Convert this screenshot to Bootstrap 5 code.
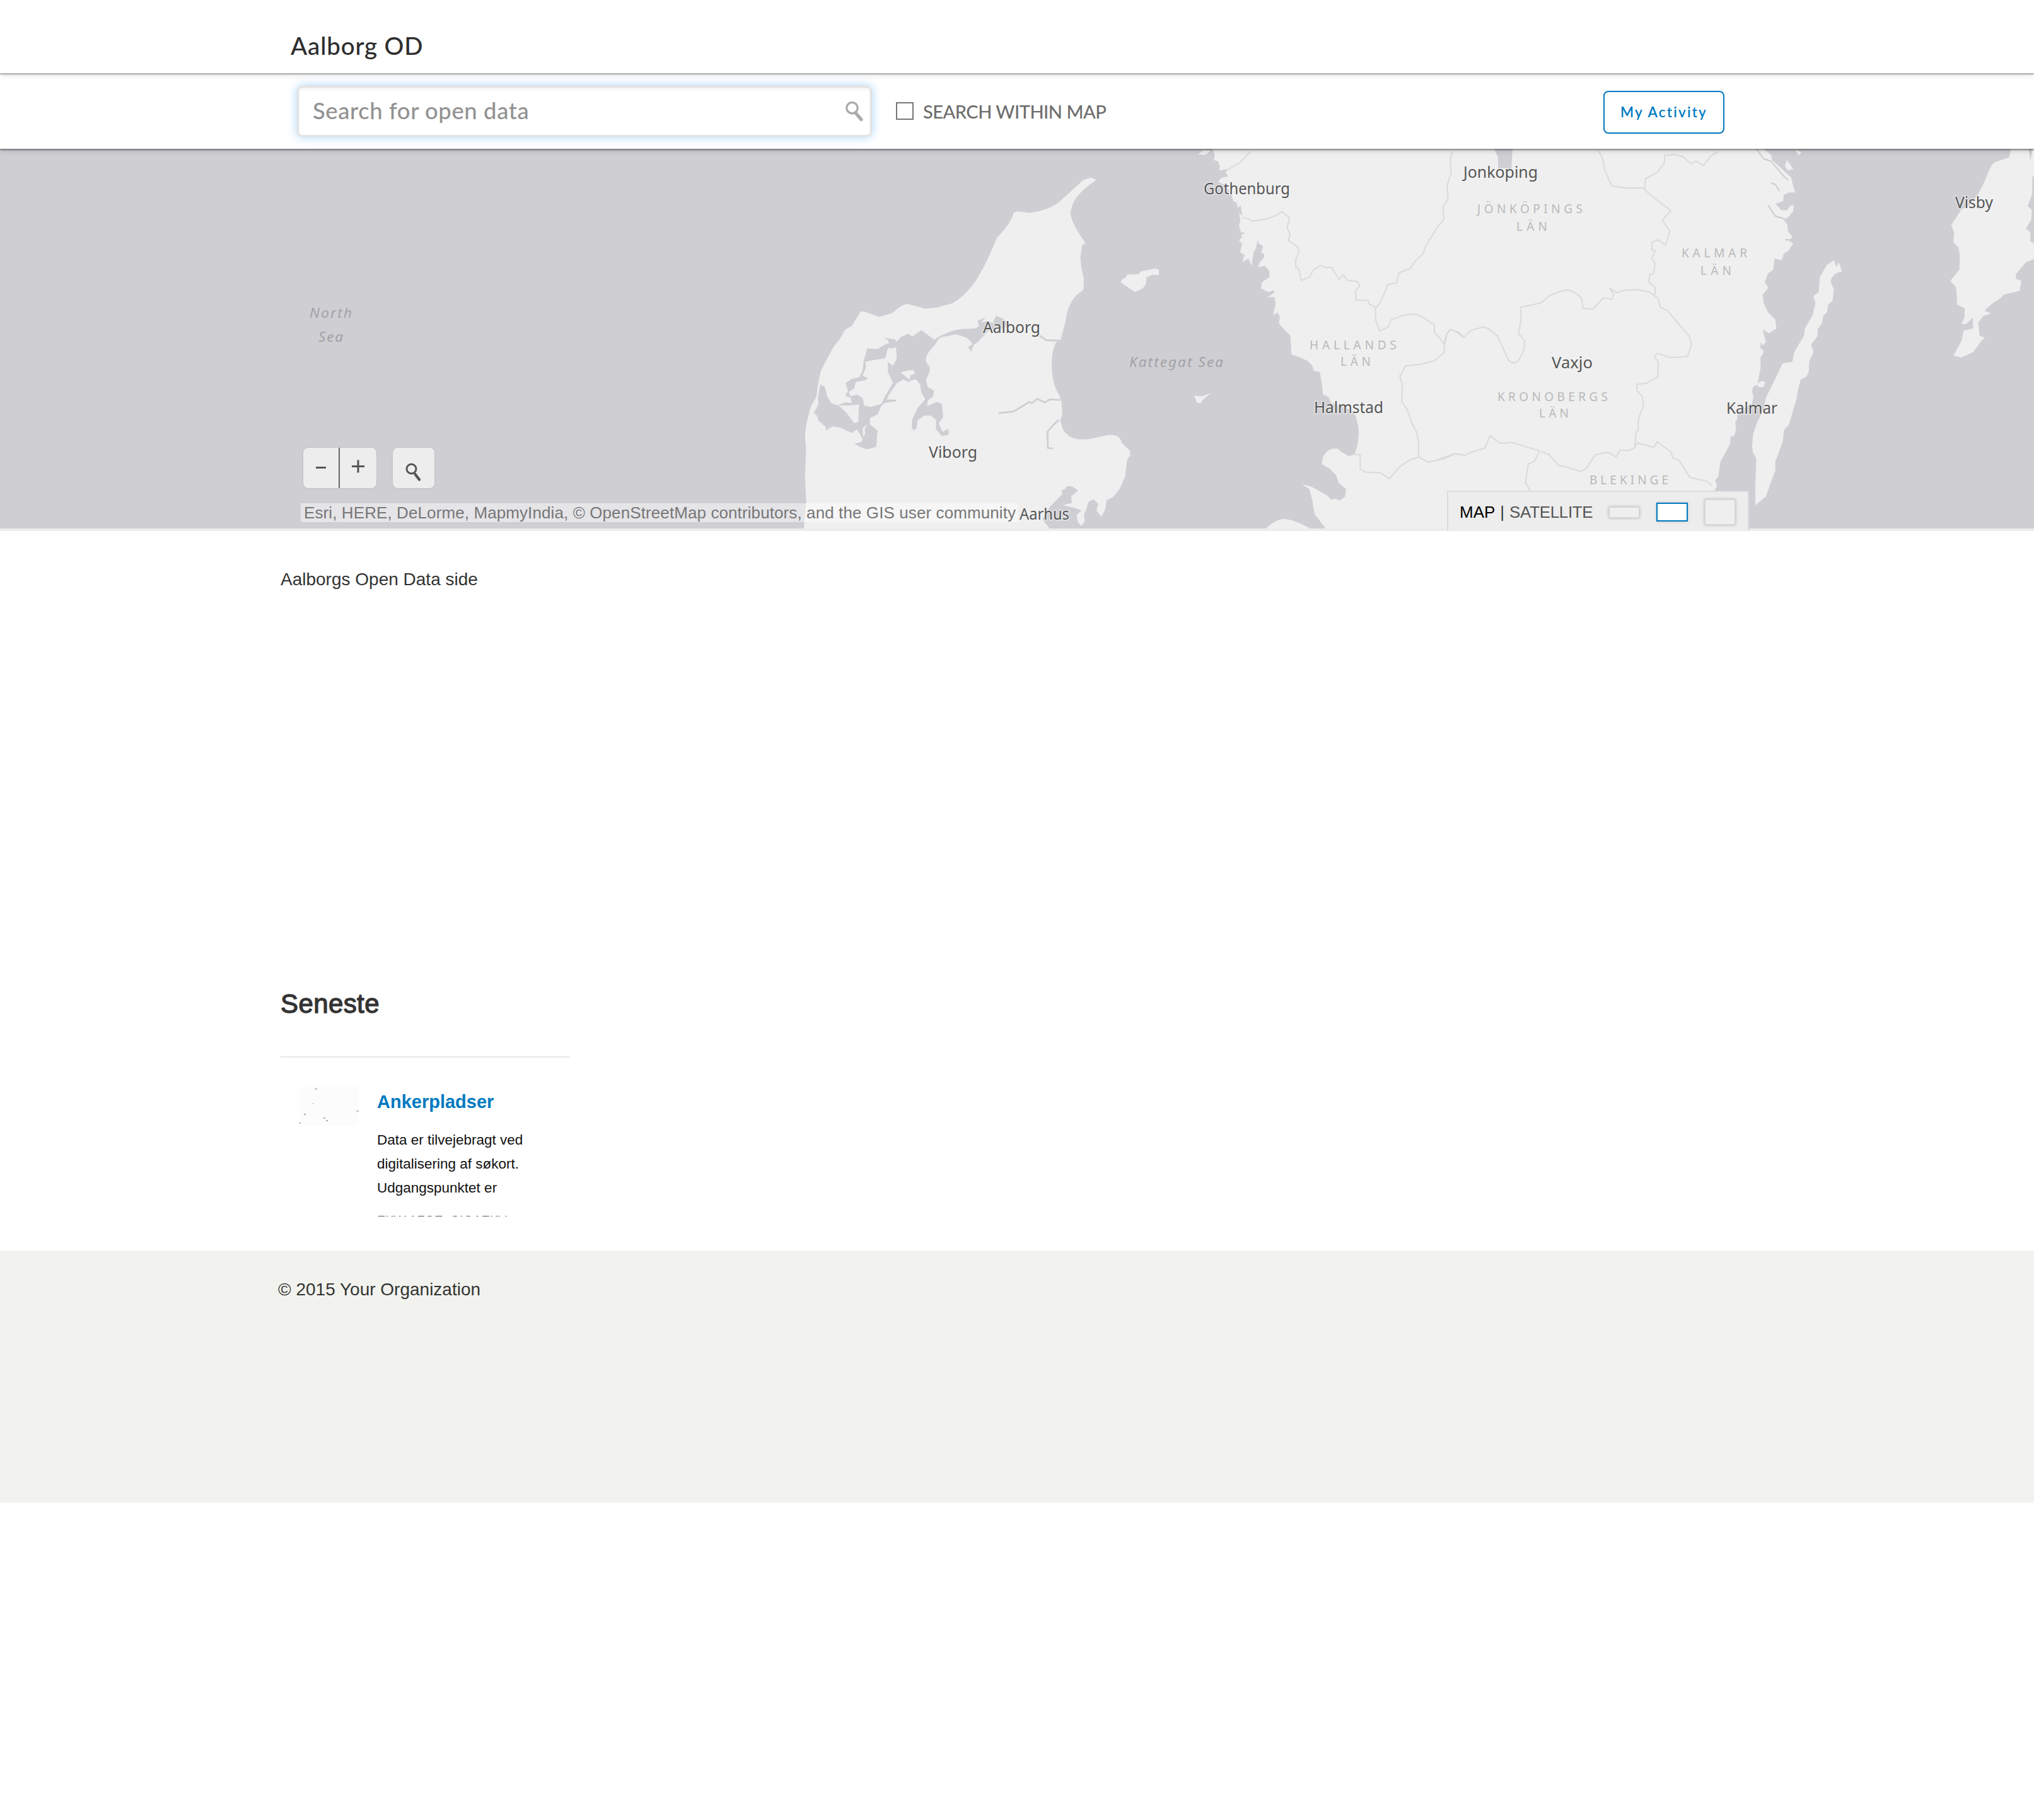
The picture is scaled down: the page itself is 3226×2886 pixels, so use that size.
<!DOCTYPE html>
<html lang="da">
<head>
<meta charset="utf-8">
<title>Aalborg OD</title>
<link href="https://cdn.jsdelivr.net/npm/bootstrap@5.3.0/dist/css/bootstrap.min.css" rel="stylesheet">
<style>
body{font-family:"Liberation Sans",Arial,sans-serif;font-size:28px;line-height:40px;color:#333;background:#fff}
.site-head{height:116px;padding:51px 0 0 461px;font:500 38.5px/42px Lato,sans-serif;letter-spacing:.85px;color:#2e2e2e;z-index:3;box-shadow:0 2px 2px rgba(0,0,0,.3),0 4px 8px rgba(0,0,0,.1)}
.search-bar{height:120px;padding:0 491px 0 471px;z-index:2;font-family:Lato,sans-serif;box-shadow:0 2px 2px rgba(0,0,0,.38),0 4px 8px rgba(0,0,0,.13)}
.search-box{width:912px;height:81px;border:3px solid #e3e2e2;border-radius:8px;box-shadow:0 0 16px #a9d5f8,inset 0 3px 4px rgba(0,0,0,.05);padding:0 11px 3px 22px}
.search-box input.form-control{font:500 36.5px/44px Lato,sans-serif;letter-spacing:.55px;height:60px;color:#777}
.search-box input::placeholder{color:#929292;opacity:1}
.within{gap:15px;margin-left:38px;font-size:29px;font-weight:500;color:#6e6e6e;letter-spacing:-.5px}
.within span{padding-top:2px}
.within input.form-check-input{width:28px;height:28px;margin:0;border:2px solid #777;border-radius:0}
.btn-activity{width:192px;height:68px;margin-top:4px;padding:0;border:2px solid #0079c1;border-radius:8px;color:#0079c1;font:600 22.5px/64px Lato,sans-serif;letter-spacing:2.2px}
.map-area{height:606px;background:#cfced3;border-bottom:4px solid #ececee}
.map-area>svg{width:3226px;height:602px}
.map-tools{left:481px;top:474px;gap:26px}
.tool{height:64px;background:#ededed;border-radius:8px;box-shadow:0 0 3px rgba(0,0,0,.12)}
.attribution{left:477px;top:562px;width:1138px;height:30px;padding-left:5px;font-size:26px;line-height:31px;letter-spacing:.1px;background:rgba(255,255,255,.45);color:#777;white-space:nowrap}
.base-switch{left:2295px;top:542px;width:479px;height:64px;background:#ededed;border:2px solid #dcdcdc;border-bottom:0;font-size:26px;line-height:30px;padding:2px 0 0 18px}
.sat{color:#555;letter-spacing:-.35px}
.sizers{gap:26px;padding-right:19px}
.sizer{width:50px;background:#efefef;border:2px solid #d6d6d6;border-radius:3px;box-shadow:0 0 4px rgba(0,0,0,.2)}
.sizer-flat{height:19px}
.sizer-tall{height:42px}
.sizer-on{height:30px;background:#fff;border-color:#0079c1;border-radius:0}
.page-body{height:1141px;padding:57px 0 0 445px}
.latest{width:459px;margin-top:628px}
.latest h2{font-size:42px;line-height:50px;margin:0;color:#333;font-weight:400;letter-spacing:.4px;-webkit-text-stroke:1.3px #333;padding-bottom:58px;border-bottom:2px solid #e8e8e8}
.entry{height:206px;margin-top:46px;padding-left:30px}
.entry h3{font-size:29px;line-height:34px;margin:7px 0 25px;font-weight:700}
.entry h3 a{color:#0079c1}
.entry p{font-size:22.5px;line-height:38px;color:#111;margin:0 0 17px;width:240px}
.owner{font-size:20px;line-height:30px;color:#555;white-space:pre}
.site-foot{height:400px;background:#f2f3ee;padding:42px 0 0 441px}
</style>
</head>
<body>
<header class="site-head bg-white position-relative">Aalborg OD</header>
<div class="search-bar bg-white position-relative d-flex align-items-center">
  <div class="search-box d-flex align-items-center">
    <input class="form-control border-0 p-0 shadow-none bg-transparent" type="text" placeholder="Search for open data" aria-label="Search">
    <svg width="32" height="36" viewBox="0 0 32 36" fill="none" stroke="#aaa"><circle cx="14" cy="14" r="9" stroke-width="3.4"/><path d="M19.5 22L29 33" stroke-width="5.4" stroke-linecap="round"/></svg>
  </div>
  <label class="within d-flex align-items-center"><input class="form-check-input" type="checkbox"><span>SEARCH WITHIN MAP</span></label>
  <button class="btn btn-activity ms-auto" type="button">My Activity</button>
</div>

<section class="map-area position-relative">
<svg class="d-block" viewBox="0 236 3226 602" fill="#efefef">
  <!-- Jutland -->
  <g transform="translate(1200 230) scale(.40816 .39541)">
    <path d="M183 1540L193 1430 188 1330 192 1220 188 1165 193 1120 210 1050 232 1010 240 950 250 905 275 855 300 808 325 775 345 740 370 725 405 667 420 668 475 689 525 675C550 655 570 635 590 638L655 656 700 652 760 635C800 610 830 580 860 530 890 480 910 430 935 370 960 345 985 315 1000 270L1015 266 1060 272C1120 265 1160 245 1190 215L1270 140 1300 130 1320 140C1250 190 1225 225 1220 275 1225 310 1240 330 1250 350L1278 393 1265 402 1258 450 1262 490 1272 540 1270 580 1240 605C1210 640 1205 680 1200 710L1180 785 1163 792C1146 830 1144 870 1150 930 1155 960 1165 985 1175 1000L1185 1030 1188 1080 1180 1105 1190 1140C1215 1180 1250 1185 1300 1178L1370 1162C1400 1162 1412 1170 1420 1195L1450 1225 1452 1245 1440 1260 1432 1330 1410 1380 1385 1412 1360 1425 1355 1460 1340 1490 1320 1465 1328 1440 1310 1420 1290 1430 1280 1465 1272 1480 1275 1510 1262 1527 1250 1515 1243 1485 1262 1465 1235 1455 1190 1445 1225 1435 1222 1410 1250 1385 1225 1368 1205 1368 1200 1378 1185 1385 1188 1400 1140 1450 1110 1500 1140 1540Z"/>
    <g fill="#cfced3">
      <path d="M540 795L560 770 590 757 605 768 640 742 690 780C730 755 770 740 800 738L850 735 865 725 858 705 890 692 872 712 900 705 918 715 930 685 955 695 985 720 960 735 900 745 860 790 845 800 833 830 822 810 838 800C835 780 800 762 770 760L720 770C700 775 705 790 685 810 660 840 650 860 665 880 680 890 672 915 658 940L665 970 690 985 685 1010 665 1025 662 1047 700 1030 720 1038 722 1060 725 1090 708 1115 722 1150 745 1138 747 1160 720 1168 697 1140 697 1100 675 1085 650 1085 625 1105 622 1135 612 1145 603 1135 605 1100 625 1055 655 1020 640 990 635 960 620 940 605 942 590 950 570 940 545 955 515 1000 505 1020 545 1022 540 1028 500 1033 485 1045 470 1080 440 1095 440 1120 470 1145 465 1210 430 1220 405 1212 380 1198 408 1190 412 1178 390 1140 370 1155 330 1135 295 1128 270 1145 268 1130 240 1105 235 1085 222 1075 240 1040 238 1010 248 960 265 970 275 1010 290 1035 320 1045 350 1075 380 1115 395 1110 398 1040 350 1045 315 1043 345 1032 370 1035 365 1008 390 1000 412 1015 418 1045 445 1050 485 1038 500 1005 530 955 510 910 510 870 530 885 545 855Z"/>
      <path d="M430 815L470 818 500 800 515 795 510 782 495 772 540 780 548 800 535 815 510 815 500 855 440 865 422 870 425 890 412 925 432 935 425 942 385 950 380 975 358 990 368 1015 345 1005 355 985 345 955 370 938 400 930 413 900 415 870Z"/>
      <g fill="none" stroke="#cfced3" stroke-linejoin="round"><path stroke-width="8" d="M1100 765L1125 782 1182 785"/><path stroke-width="7" d="M940 1075L1000 1068 1025 1052 1060 1030 1070 1035 1090 1018 1120 1032 1140 1020 1180 1022"/><path stroke-width="7" d="M1175 1102L1155 1120 1130 1150 1132 1215 1152 1217"/></g>
    </g>
    <path d="M560 912L585 905 610 903 615 918 600 922 592 940ZM430 1120L412 1135 413 1170 422 1160 420 1140ZM1415 550L1420 540 1435 530 1440 520 1485 518 1492 507 1525 500 1550 495 1563 500 1563 522 1540 520 1515 530 1512 560 1500 575 1470 590 1445 572Z"/>
  </g>
  <!-- Swedish west coast -->
  <g transform="translate(1820 230) scale(.33333 .39541)">
    <path d="M310 15L320 45 315 60 335 65 345 85 340 102 385 97 370 110 385 125 350 132 335 148 370 160 400 200 408 225 425 232 430 255 442 240 452 285 435 270 442 300 435 325 445 350 465 350 445 362 450 370 435 382 450 395 440 430 462 440 450 470 480 455 495 485 505 430 515 415 525 380 530 395 550 405 540 435 555 435 555 450 535 470 525 490 560 485 580 505 580 530 545 550 540 575 575 590 600 582 605 590 572 610 605 610 610 640 597 680 620 672 630 690 625 715 640 730 680 765 685 840 720 850 760 865 785 885 790 905 820 910 830 960 835 1000 860 1010 875 1035 960 1060 990 1085 1000 1120C1012 1160 1000 1210 985 1240L960 1248 920 1230 905 1218 885 1217C850 1222 830 1245 830 1280L870 1300 898 1325 910 1355 945 1380 940 1410 915 1425 890 1418 875 1423 855 1405 780 1370 735 1360 770 1380 785 1430 795 1480 850 1540H1505V15ZM560 1540Q610 1500 650 1500T780 1540ZM240 38L265 20 300 22 275 40ZM222 1005L260 1008 302 995 265 1020 252 1036 235 1033Z"/>
  </g>
  <path d="M2318 236H2704V838H2318Z"/>
  <!-- Swedish east coast, Oland and Gotland -->
  <g transform="translate(2700 230) scale(.33546 .39541)">
    <path d="M-5 15H290L325 40 330 60 420 130 425 150 438 190 410 190 385 200 382 225 345 235 375 262 400 262 418 242 432 240 430 265 405 290 385 300 402 320 405 345 425 368 410 385 430 395 405 425 385 435 375 462 342 455 335 500 310 515 295 550 312 572 300 585 285 600 290 635 310 670 345 700 350 735 315 755 285 740 300 790 285 805 275 790 275 815 290 825 285 840 275 850 275 895 260 960 240 970 235 990 242 1010 235 1035 165 1075 165 1100 155 1110 160 1140 150 1168 135 1168 130 1200 95 1255 85 1270 75 1330 60 1345 70 1365 55 1390 50 1540H-5Z"/>
    <path fill="none" stroke="#cfced3" stroke-width="6" d="M255 15L290 55 325 65 385 125 405 140M325 152L345 158 365 185M310 240L345 285 395 298M392 380H425"/>
    <path d="M400 60L430 97 405 102 390 85ZM440 20L470 28 455 42ZM255 960L280 945 298 950 290 970 270 972ZM622 462L635 490 645 470 660 508C630 510 605 530 608 550L622 580 615 625 595 640 590 670 572 685 565 715 545 740 545 765 515 800 525 830 505 870 503 910 490 930 465 940 450 990 445 1020 430 1060 410 1120 385 1145 380 1190 345 1270 345 1305 325 1350 300 1410 250 1445 250 1370 255 1255 240 1235 235 1210 240 1160 260 1110 290 1060 300 1015 340 945 380 875 425 870 435 830 480 765 485 735 520 685 535 635 525 605 550 590 555 530 590 480ZM1460 15L1450 50 1420 58 1380 70 1365 85C1350 110 1330 160 1305 195L1260 245 1225 258 1177 320 1190 350 1187 390 1210 410 1217 440 1215 500 1172 545 1200 570 1205 640 1240 655 1240 690 1225 718 1245 718 1280 692 1280 735 1235 745 1225 785 1187 845 1225 852 1280 830 1320 785 1335 772 1310 765 1305 710 1330 685 1365 675 1335 665C1370 630 1400 625 1425 600L1500 585 1508 545 1480 535 1485 515 1530 470 1575 455V400L1550 385 1552 350 1530 335 1555 300 1558 260 1538 245 1560 195 1560 130 1575 110V15H1560L1552 65 1542 15Z"/>
  </g>
  <path fill="#cfced3" d="M2370 236L2376 250V266L2397 268 2399 236Z"/>
  <!-- county borders -->
  <g fill="none" stroke="#dadada" stroke-width="2">
    <g transform="translate(1820 230) scale(.33333 .39541)">
      <path vector-effect="non-scaling-stroke" d="M490 25L440 70 385 98M450 290L475 295 500 305 560 298 610 283 640 267 675 292 665 330 678 360 670 382 715 408 720 430 705 460 705 487 722 500 730 543 770 530 790 500 825 483 850 492 875 490 912 540 932 520 950 542 1000 548 1010 565 990 585 992 622 1050 623 1055 638 1085 650 1085 700 1105 745 1145 730 1160 700 1230 680 1280 678 1310 690 1365 722 1365 750 1412 797 1412 832 1365 865 1295 880 1225 887 1215 910 1200 925 1212 960 1210 1030 1235 1060 1260 1120 1280 1150 1290 1190 1290 1250 1335 1272 1410 1258 1465 1238 1500 1242M1085 655L1105 635 1145 560 1185 552 1197 512 1250 495 1275 465 1312 435 1320 410 1375 335 1410 298 1405 250 1430 215 1425 165 1445 110 1440 60 1450 25M1412 797L1420 765 1440 740 1475 752 1500 770M985 1240L1012 1243 1012 1300 1040 1312 1110 1315 1150 1338 1200 1290 1250 1262 1290 1252"/>
    </g>
    <g transform="translate(2280 230) scale(.33333 .39541)">
      <path vector-effect="non-scaling-stroke" d="M762 20L785 50 795 100 830 165 900 172 985 172 990 135 1045 110 1080 70 1080 42 1130 38 1170 48 1205 75 1230 65 1265 82 1300 45 1335 25M980 175L1040 218 1110 263 1070 302 1105 345 1085 402 1050 380 1020 390 1020 420 1035 425 1020 455 1035 475 1028 515 1010 520 1005 550 1035 570 1035 600M35 797L45 755 60 740 100 750 125 770 160 743 215 730 240 735 265 752 285 765 325 840C340 880 375 885 395 850L412 820 415 785 385 755 398 700 395 650 430 645 495 632 530 605 590 585C630 575 660 590 685 615L692 655 740 658 790 612 830 618 838 598 818 575 855 592 885 583 950 580 1010 590 1050 615 1060 650 1095 665 1150 720 1200 770 1208 800 1190 848 1110 853 1045 835 1032 850 1050 870 1048 930 995 955 948 960 950 985 975 1010 980 1045 955 1100 955 1145 945 1150 938 1215 910 1225 870 1222 850 1250 810 1232 750 1242 710 1295 680 1310 610 1290 575 1285 530 1240 480 1225 350 1192 300 1197 250 1165 225 1215 150 1235 130 1245 80 1238 0 1262M938 1215L950 1195 1030 1212 1045 1190 1110 1230 1120 1255 1150 1265 1200 1333 1280 1348 1305 1365M485 1227L460 1270 432 1278 418 1352 440 1385"/>
    </g>
  </g>
  <g font-family="Noto Sans" font-size="24.5" fill="#555">
    <g stroke="#f4f4f4" stroke-width="3" stroke-opacity=".6" paint-order="stroke">
    <text x="1559" y="528" textLength="91" lengthAdjust="spacingAndGlyphs">Aalborg</text>
    <text x="1473" y="726" textLength="77" lengthAdjust="spacingAndGlyphs">Viborg</text>
    <text x="1617" y="824" textLength="79" lengthAdjust="spacingAndGlyphs">Aarhus</text>
    <text x="1909" y="308" textLength="137" lengthAdjust="spacingAndGlyphs">Gothenburg</text>
    <text x="2084" y="655" textLength="110" lengthAdjust="spacingAndGlyphs">Halmstad</text>
    <text x="2321" y="282" textLength="118" lengthAdjust="spacingAndGlyphs">Jonkoping</text>
    <text x="2461" y="584" textLength="65" lengthAdjust="spacingAndGlyphs">Vaxjo</text>
    <text x="2738" y="656" textLength="81" lengthAdjust="spacingAndGlyphs">Kalmar</text>
    <text x="3101" y="330" textLength="60" lengthAdjust="spacingAndGlyphs">Visby</text>
    </g>
    <g font-size="19" fill="#b9b9b9">
    <text x="2077" y="554" textLength="138">HALLANDS</text><text x="2126" y="580" textLength="48">LÄN</text>
    <text x="2343" y="338" textLength="167">JÖNKÖPINGS</text><text x="2405" y="366" textLength="49">LÄN</text>
    <text x="2667" y="408" textLength="104">KALMAR</text><text x="2697" y="436" textLength="49">LÄN</text>
    <text x="2375" y="636" textLength="175">KRONOBERGS</text><text x="2441" y="662" textLength="47">LÄN</text>
    <text x="2521" y="768" textLength="125">BLEKINGE</text>
    </g>
    <g font-size="22.5" font-style="italic" fill="#a3a2a7">
    <text x="1791" y="582" textLength="149">Kattegat Sea</text>
    <text x="491" y="504" textLength="67">North</text><text x="505" y="542" textLength="39">Sea</text>
    </g>
  </g>
</svg>
  <div class="map-tools position-absolute d-flex">
    <div class="tool d-flex"><svg width="116" height="64" fill="none" stroke="#555" stroke-width="3"><path d="M20 31.5H36M77 29.5H97M87 19.5V39.5"/><path stroke="#666" stroke-width="2" d="M57 -1V65"/></svg></div>
    <div class="tool d-flex"><svg width="66" height="64" fill="none" stroke="#555"><circle cx="29.5" cy="33.5" r="7.5" stroke-width="3"/><path d="M35.500 42L42 50.500" stroke-width="4.400" stroke-linecap="round"/></svg></div>
  </div>
  <div class="attribution position-absolute">Esri, HERE, DeLorme, MapmyIndia, © OpenStreetMap contributors, and the GIS user community</div>
  <div class="base-switch position-absolute d-flex align-items-center">
    <span class="text-black">MAP</span><span class="ms-2 me-1 pe-1">|</span><span class="sat">SATELLITE</span>
    <span class="sizers d-flex align-items-center ms-auto"><i class="sizer sizer-flat"></i><i class="sizer sizer-on"></i><i class="sizer sizer-tall"></i></span>
  </div>
</section>

<main class="page-body">
  <div>Aalborgs Open Data side</div>
  <section class="latest">
    <h2>Seneste</h2>
    <article class="entry d-flex overflow-hidden">
      <svg class="flex-shrink-0" width="94" height="62"><path fill="#fcfcfc" d="M0 0H94V62H0Z"/><g fill="#aaa"><path d="M24 3h4v1.500h-4zM7 43h3v2h-3zM0 57h2v2h-2zM38 49h3v2h-3zM42 53h3v2h-3zM90 38h4v1.500h-4z"/><path fill="#ddd" d="M20 26h3v2h-3z"/></g></svg>
      <div style="margin-left:29px">
        <h3><a class="text-decoration-none" href="#">Ankerpladser</a></h3>
        <p>Data er tilvejebragt ved digitalisering af søkort. Udgangspunktet er</p>
        <div class="owner">EKW AFGE  GIGAEKV</div>
      </div>
    </article>
  </section>
</main>
<footer class="site-foot">© 2015 Your Organization</footer>
<script src="https://cdn.jsdelivr.net/npm/bootstrap@5.3.0/dist/js/bootstrap.bundle.min.js"></script>
</body>
</html>
